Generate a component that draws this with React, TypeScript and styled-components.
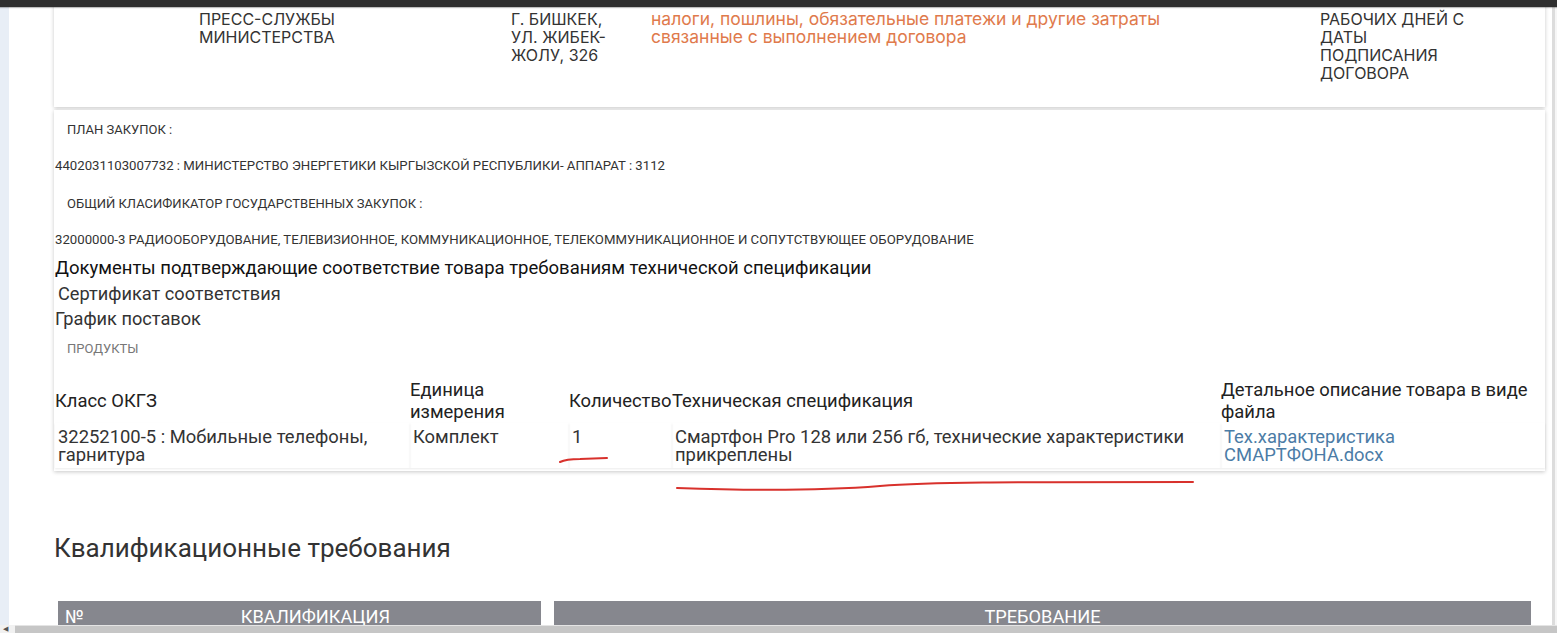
import React from "react";
import styled, { createGlobalStyle } from "styled-components";

const GlobalStyle = createGlobalStyle`
  html, body { margin: 0; padding: 0; background: #fff; overflow: hidden; }
  body { font-family: Roboto, "Noto Sans", sans-serif; color: #333; }
  * { box-sizing: border-box; }
`;

const Screen = styled.div`
  position: relative;
  width: 1557px;
  height: 633px;
  display: grid;
  grid-template-rows: 7px 1fr 8px;
  overflow: hidden;
`;

const TopBar = styled.div`
  background: #2f2f2f;
  box-shadow: 0 1px 1px rgba(0, 0, 0, 0.25);
  z-index: 2;
`;

const Middle = styled.div`
  display: flex;
  min-height: 0;
`;

const SideRail = styled.div`
  width: 9px;
  flex: none;
  background: #e8eef6;
`;

const Viewport = styled.div`
  flex: 1;
  min-width: 0;
  overflow: hidden;
`;

const VTrack = styled.div`
  width: 6px;
  flex: none;
  background: linear-gradient(to right, #fff 0 1px, #dcdcdc 1px 4px, #f6f6f6 4px);
`;

const HScroll = styled.div`
  display: grid;
  grid-template-columns: 15px 1fr;
  background: #f1f1f1;
  z-index: 2;
`;

const HArrow = styled.div`
  font-size: 7px;
  line-height: 8px;
  color: #555;
  padding-left: 3px;
`;

const HThumb = styled.div`
  background: #c6c6c6;
  border-top: 1px solid #e4e4e4;
`;

/* content scrolled part-way down the tender page */
const Page = styled.div`
  margin-top: -7px;
  padding: 0 6px 0 45px;
`;

const Card = styled.section`
  background: #fff;
  box-shadow: 0 1px 4px rgba(0, 0, 0, 0.22);
`;

const ContactRow = styled(Card)`
  display: grid;
  grid-template-columns: 145px 312px 140px 669px 1fr;
  padding: 10px 0 25px;
  font-family: Inter, "Noto Sans", sans-serif;
  font-size: 16px;
  line-height: 18px;
`;

const UpperCell = styled.div`
  text-transform: uppercase;
  color: #333;
  white-space: pre-line;
`;

const NoteCell = styled.div<{ $accent?: boolean }>`
  color: ${(p) => (p.$accent ? "#e07a4c" : "#333")};
  font-size: 17.5px;
  white-space: pre-line;
`;

const DetailsCard = styled(Card)`
  margin-top: 3px;
  padding: 10px 0 3px 1px;
`;

const FieldLabel = styled.div<{ $gap: number }>`
  margin-top: ${(p) => p.$gap}px;
  padding-left: 12px;
  font-size: 13px;
  line-height: 20px;
  text-transform: uppercase;
  color: #333;
`;

const FieldValue = styled.div`
  margin-top: 16px;
  font-size: 13.2px;
  line-height: 20px;
  text-transform: uppercase;
  color: #333;
`;

const DocsHeading = styled.div`
  margin-top: 6px;
  font-size: 18.5px;
  line-height: 25px;
  color: #111;
`;

const DocItem = styled.div<{ $indent?: number }>`
  padding-left: ${(p) => p.$indent ?? 0}px;
  font-size: 18.2px;
  line-height: 25px;
  color: #333;
`;

const SectionTag = styled.div`
  margin-top: 8px;
  padding-left: 12px;
  font-size: 13px;
  line-height: 20px;
  color: #777;
  text-transform: uppercase;
`;

const ProductGrid = styled.div`
  margin-top: 20px;
  display: grid;
  grid-template-columns: 355px 159px 103px 549px 1fr;
`;

const HeadCell = styled.div`
  height: 44px;
  display: flex;
  align-items: center;
  font-size: 18.4px;
  line-height: 22px;
  color: #222;
  white-space: nowrap;
`;

const BodyCell = styled.div`
  padding: 5px 3px 4px;
  font-size: 18.4px;
  line-height: 18px;
  color: #333;
  box-shadow: 0 1px 2px rgba(0, 0, 0, 0.08);
`;

const FileLink = styled.a`
  color: #4b7ca6;
  text-decoration: none;
`;

const SectionTitle = styled.h2`
  margin: 62px 0 0;
  font-size: 26px;
  line-height: 30px;
  font-weight: 400;
  color: #333;
`;

const QualHeader = styled.div`
  margin: 38px 0 0 4px;
  width: 1473px;
  display: grid;
  grid-template-columns: 483px 1fr;
  column-gap: 13px;
`;

const QualBlock = styled.div<{ $cols: string }>`
  display: grid;
  grid-template-columns: ${(p) => p.$cols};
  background: #86878e;
  padding: 6px 0 0;
  height: 30px;
  font-size: 18.2px;
  line-height: 20px;
  color: #fff;
  text-transform: uppercase;
`;

const QualCol = styled.div<{ $center?: boolean }>`
  text-align: ${(p) => (p.$center ? "center" : "left")};
  padding-left: ${(p) => (p.$center ? 0 : 7)}px;
`;

const Ink = styled.svg`
  position: absolute;
  inset: 0;
  pointer-events: none;
  z-index: 3;
`;

export default function App() {
  return (
    <>
      <GlobalStyle />
      <Screen>
        <TopBar />
        <Middle>
          <SideRail />
          <Viewport>
            <Page>
              <ContactRow>
                <div />
                <UpperCell>{"пресс-службы\nминистерства"}</UpperCell>
                <UpperCell>{"г. бишкек,\nул. жибек-\nжолу, 326"}</UpperCell>
                <NoteCell $accent>
                  {"налоги, пошлины, обязательные платежи и другие затраты\nсвязанные с выполнением договора"}
                </NoteCell>
                <UpperCell>{"рабочих дней с\nдаты\nподписания\nдоговора"}</UpperCell>
              </ContactRow>

              <DetailsCard>
                <FieldLabel $gap={0}>План закупок :</FieldLabel>
                <FieldValue>
                  4402031103007732 : Министерство энергетики Кыргызской Республики- Аппарат : 3112
                </FieldValue>
                <FieldLabel $gap={18}>Общий класификатор государственных закупок :</FieldLabel>
                <FieldValue>
                  32000000-3 Радиооборудование, телевизионное, коммуникационное, телекоммуникационное и сопутствующее оборудование
                </FieldValue>
                <DocsHeading>
                  Документы подтверждающие соответствие товара требованиям технической спецификации
                </DocsHeading>
                <DocItem $indent={3}>Сертификат соответствия</DocItem>
                <DocItem>График поставок</DocItem>
                <SectionTag>Продукты</SectionTag>

                <ProductGrid>
                  <HeadCell>Класс ОКГЗ</HeadCell>
                  <HeadCell>
                    Единица
                    <br />
                    измерения
                  </HeadCell>
                  <HeadCell>Количество</HeadCell>
                  <HeadCell>Техническая спецификация</HeadCell>
                  <HeadCell>
                    Детальное описание товара в виде
                    <br />
                    файла
                  </HeadCell>

                  <BodyCell>
                    32252100-5 : Мобильные телефоны,
                    <br />
                    гарнитура
                  </BodyCell>
                  <BodyCell>Комплект</BodyCell>
                  <BodyCell>1</BodyCell>
                  <BodyCell>
                    Смартфон Pro 128 или 256 гб, технические характеристики
                    <br />
                    прикреплены
                  </BodyCell>
                  <BodyCell>
                    <FileLink href="#">
                      Тех.характеристика
                      <br />
                      СМАРТФОНА.docx
                    </FileLink>
                  </BodyCell>
                </ProductGrid>
              </DetailsCard>

              <SectionTitle>Квалификационные требования</SectionTitle>

              <QualHeader>
                <QualBlock $cols="32px 1fr">
                  <QualCol>№</QualCol>
                  <QualCol $center>Квалификация</QualCol>
                </QualBlock>
                <QualBlock $cols="1fr">
                  <QualCol $center>Требование</QualCol>
                </QualBlock>
              </QualHeader>
            </Page>
          </Viewport>
          <VTrack />
        </Middle>
        <HScroll>
          <HArrow>◀</HArrow>
          <HThumb />
        </HScroll>

        {/* hand-drawn red marks over the products table */}
        <Ink width="1557" height="633" viewBox="0 0 1557 633">
          <path
            d="M560 462 Q 566 459 580 459 L 607 458"
            fill="none"
            stroke="#d8312c"
            strokeWidth="2"
            strokeLinecap="round"
          />
          <path
            d="M677 488 C 760 491, 830 490, 880 486 S 1000 482, 1193 482"
            fill="none"
            stroke="#d8312c"
            strokeWidth="2"
            strokeLinecap="round"
          />
        </Ink>
      </Screen>
    </>
  );
}
